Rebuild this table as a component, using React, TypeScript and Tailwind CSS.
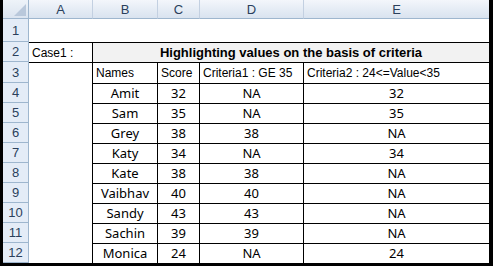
const rows: [string, string, string, string][] = [
  ["Amit", "32", "NA", "32"],
  ["Sam", "35", "NA", "35"],
  ["Grey", "38", "38", "NA"],
  ["Katy", "34", "NA", "34"],
  ["Kate", "38", "38", "NA"],
  ["Vaibhav", "40", "40", "NA"],
  ["Sandy", "43", "43", "NA"],
  ["Sachin", "39", "39", "NA"],
  ["Monica", "24", "NA", "24"],
];

const rowHead =
  "flex items-center justify-center bg-[#e4ecf7] border-r border-b border-[#9eb6ce] text-[13px] text-[#2a3f5c]";
const colHead =
  "flex items-center justify-center bg-linear-to-b from-[#f3f6fb] to-[#d9e3ef] border-l border-b border-l-[#c3d0e1] border-b-[#9eb6ce] text-[13px] text-[#2a3f5c]";
const cell = "border-t border-l border-black flex items-center";
const data = `${cell} justify-center text-[13px] text-black font-['Noto_Sans',sans-serif]`;
const head = `${cell} px-[3px] text-[12px] text-black whitespace-nowrap`;

export default function App() {
  return (
    <div className="w-[493px] h-[266px] bg-black pl-[3px] pr-[4px] pb-[3px] font-['Liberation_Sans',Arial,sans-serif]">
      <div className="grid bg-white grid-cols-[26px_63px_65px_42px_104px_186px] grid-rows-[19px_23px_20px_21px_repeat(9,20px)] leading-none">
        {/* ── column headers ─────────────────────────────── */}
        <div className="relative bg-linear-to-b from-[#eef3f9] to-[#dbe4f0] border-r border-b border-[#9eb6ce]">
          <svg className="absolute right-[2px] bottom-[2px]" width="12" height="12" viewBox="0 0 12 12">
            <polygon points="12,0 12,12 0,12" fill="#b9c8db" />
          </svg>
        </div>
        {["A", "B", "C", "D", "E"].map((c, i) => (
          <div key={c} className={i === 0 ? colHead.replace("border-l ", "") : colHead}>
            {c}
          </div>
        ))}

        {/* ── row 1 ─────────────────────────────────────── */}
        <div className={rowHead}>1</div>
        <div className="col-span-5" />

        {/* ── row 2 ─────────────────────────────────────── */}
        <div className={rowHead}>2</div>
        <div className="border-t border-black flex items-center pl-[3px] text-[12px] text-black">
          Case1 :
        </div>
        <div className={`${cell} col-span-4 justify-center bg-[#f2f2f2] text-[13px] font-bold text-black`}>
          Highlighting values on the basis of criteria
        </div>

        {/* ── row 3 ─────────────────────────────────────── */}
        <div className={rowHead}>3</div>
        <div className="border-t border-black" />
        <div className={head}>Names</div>
        <div className={head}>Score</div>
        <div className={head}>Criteria1 : GE 35</div>
        <div className={head}>Criteria2 : 24&lt;=Value&lt;35</div>

        {/* ── data rows ─────────────────────────────────── */}
        {rows.map((r, i) => (
          <div key={r[0]} className="contents">
            <div className={rowHead}>{i + 4}</div>
            <div />
            {r.map((v, j) => (
              <div key={j} className={data}>
                {v}
              </div>
            ))}
          </div>
        ))}
      </div>
    </div>
  );
}
